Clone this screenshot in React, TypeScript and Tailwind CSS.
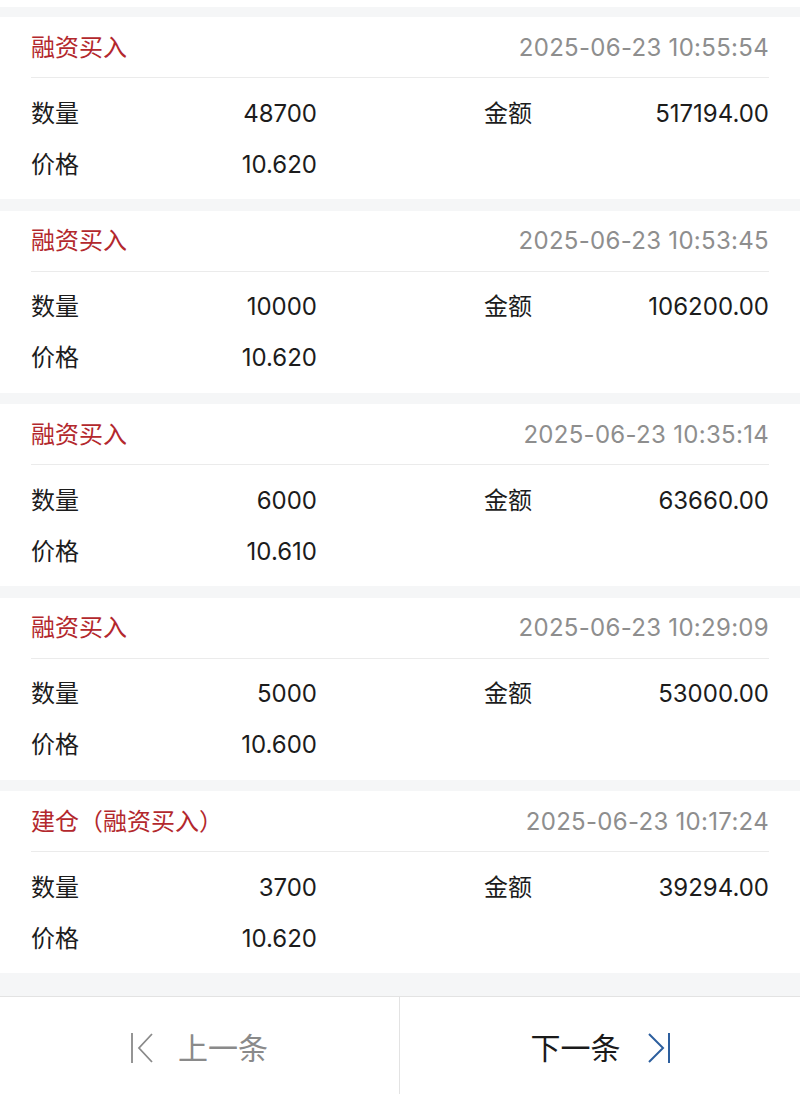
import React from "react";

type Rec = { title: string; time: string; qty: string; amount: string; price: string };

const records: Rec[] = [
  { title: "融资买入", time: "2025-06-23 10:55:54", qty: "48700", amount: "517194.00", price: "10.620" },
  { title: "融资买入", time: "2025-06-23 10:53:45", qty: "10000", amount: "106200.00", price: "10.620" },
  { title: "融资买入", time: "2025-06-23 10:35:14", qty: "6000", amount: "63660.00", price: "10.610" },
  { title: "融资买入", time: "2025-06-23 10:29:09", qty: "5000", amount: "53000.00", price: "10.600" },
  { title: "建仓（融资买入）", time: "2025-06-23 10:17:24", qty: "3700", amount: "39294.00", price: "10.620" },
];

function Card({ r }: { r: Rec }) {
  return (
    <div className="bg-white h-[182px] px-[31px] flex flex-col">
      <div className="h-[61px] pt-[1px] flex items-center justify-between border-b border-[#ebebeb] shrink-0">
        <span className="text-[24px] text-[#b3282d] leading-none">{r.title}</span>
        <span className="text-[24px] text-[#8e8e8e] leading-none tracking-[0.3px]">{r.time}</span>
      </div>
      <div className="pt-[10px] grid grid-cols-[286px_1fr_285px] grid-rows-[51px_51px] items-center text-[24px] text-[#1c1c1c] leading-none">
        <div className="flex justify-between">
          <span>数量</span>
          <span>{r.qty}</span>
        </div>
        <div />
        <div className="flex justify-between">
          <span>金额</span>
          <span>{r.amount}</span>
        </div>
        <div className="flex justify-between">
          <span>价格</span>
          <span>{r.price}</span>
        </div>
        <div />
        <div />
      </div>
    </div>
  );
}

export default function App() {
  return (
    <div
      className="w-[800px] h-[1094px] bg-[#f5f6f7] flex flex-col overflow-hidden"
      style={{ fontFamily: "Inter, 'Noto Sans CJK SC', sans-serif" }}
    >
      <div className="h-[7px] bg-white shrink-0" />
      <div className="pt-[10px] flex flex-col gap-[11.5px]">
        {records.map((r, i) => (
          <Card key={i} r={r} />
        ))}
      </div>
      <div className="flex-1" />
      <div className="h-[98px] shrink-0 bg-white border-t border-[#e3e3e3] grid grid-cols-2">
        <div className="border-r border-[#e3e3e3] flex items-center justify-center gap-[25px] pt-[5px]">
          <svg width="22" height="30" viewBox="0 0 22 30" fill="none" stroke="#8a8a8a" strokeWidth="1.8">
            <line x1="1" y1="0" x2="1" y2="30" />
            <polyline points="21,1 8,15 21,29" />
          </svg>
          <span className="text-[30px] text-[#8a8a8a] leading-none">上一条</span>
        </div>
        <div className="flex items-center justify-center gap-[27px] pt-[5px]">
          <span className="text-[30px] text-[#1a1a1a] leading-none">下一条</span>
          <svg width="22" height="30" viewBox="0 0 22 30" fill="none" stroke="#2d5f9e" strokeWidth="2">
            <polyline points="1,1 15,15 1,29" />
            <line x1="21" y1="0" x2="21" y2="30" />
          </svg>
        </div>
      </div>
    </div>
  );
}
